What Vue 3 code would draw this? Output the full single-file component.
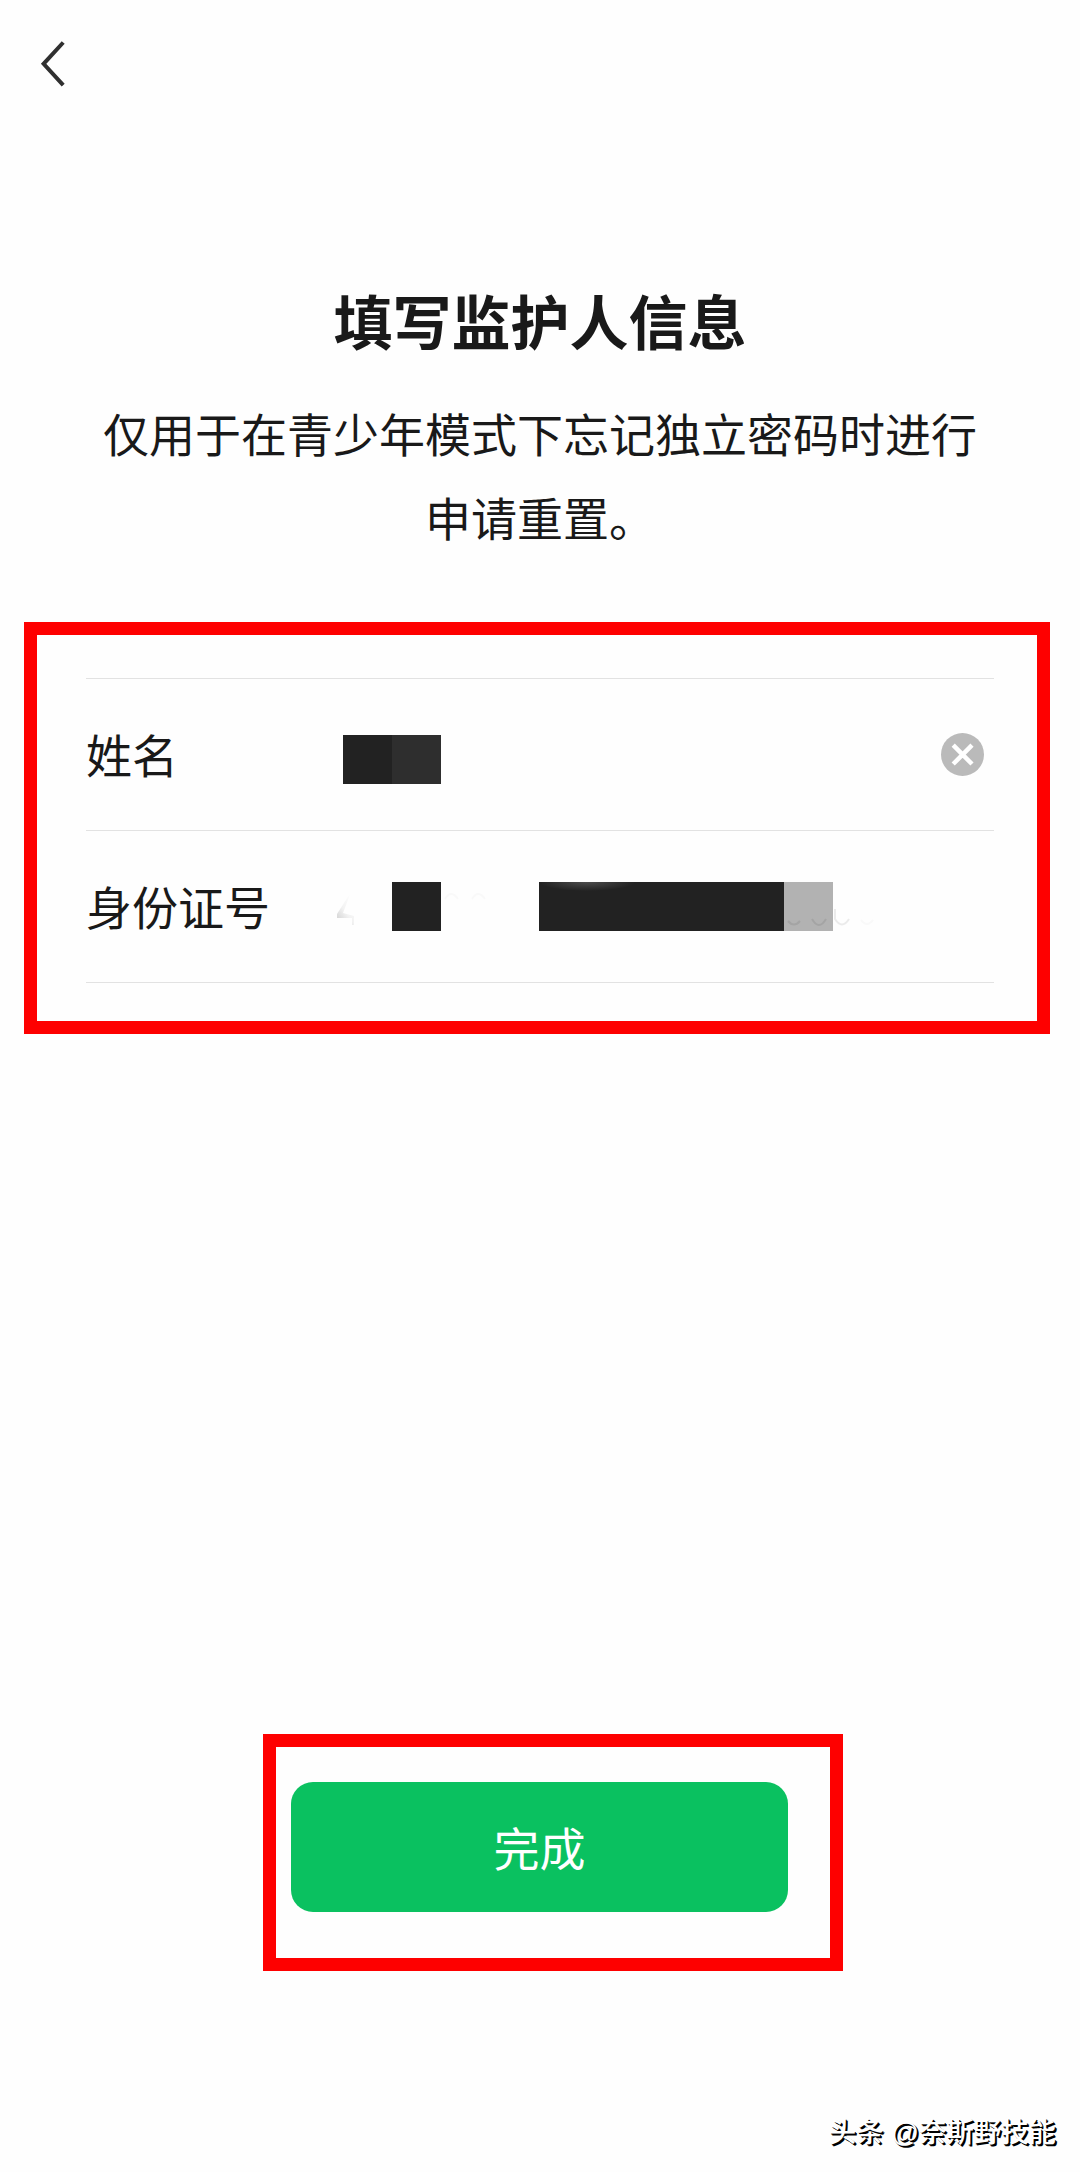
<template>
  <div class="page">
    <header class="nav-bar">
      <svg class="nav-bar__back" viewBox="0 0 28 50" aria-label="返回">
        <path d="M25.2 3.5 L5.6 24.8 L25.2 46.2" />
      </svg>
    </header>

    <section class="intro">
      <h1 class="intro__title">填写监护人信息</h1>
      <p class="intro__text">仅用于在青少年模式下忘记独立密码时进行<br />申请重置。</p>
    </section>

    <section class="highlight highlight--form">
      <div class="form">
        <div v-for="field in fields" :key="field.key" class="form__row">
          <span class="form__label">{{ field.label }}</span>
          <div class="form__value">
            <span
              v-for="(block, index) in field.blocks"
              :key="index"
              :class="['mask', `mask--${block}`]"
            ></span>
            <!-- traces left around the masked number -->
            <svg v-if="field.key === 'id'" class="form__trace" viewBox="0 0 570 49">
              <defs>
                <linearGradient id="trace" x1="0" y1="1" x2="0.7" y2="0">
                  <stop offset="0.1" stop-color="#d4d4d4" />
                  <stop offset="0.5" stop-color="#f2f2f2" />
                  <stop offset="1" stop-color="#fefefe" />
                </linearGradient>
                <radialGradient id="glow">
                  <stop offset="0" stop-color="#4c4c4c" />
                  <stop offset="1" stop-color="#222" />
                </radialGradient>
              </defs>
              <path d="M15 10 L1 32 V36 H16 V43 H18 V34 L7 31 Z" fill="url(#trace)" />
              <ellipse cx="251" cy="0" rx="48" ry="9" fill="url(#glow)" />
              <g class="form__arcs">
                <path d="M109 17 q6 -10 13 0 M136 17 q6 -10 13 0" />
                <path d="M452 39 q6 7 12 0 M476 37 q7 12 14 0" stroke="#a4a4a4" />
                <path d="M499 27 v10 q7 11 14 0" stroke="#ebebeb" />
                <path d="M525 38 q6 8 12 0" />
              </g>
            </svg>
          </div>
          <svg v-if="field.clearable" class="form__clear" viewBox="0 0 43 43">
            <circle cx="21.5" cy="21.5" r="21.5" fill="#bababa" />
            <path d="M12.2 12.2 L31 31 M31 12.2 L12.2 31" />
          </svg>
        </div>
      </div>
    </section>

    <section class="highlight highlight--action">
      <button class="submit" type="button">完成</button>
    </section>

    <footer class="credit">头条 @奈斯野技能</footer>
  </div>
</template>

<script setup>
const fields = [
  {
    key: 'name',
    label: '姓名',
    blocks: ['dark', 'soft'],
    clearable: true
  },
  {
    key: 'id',
    label: '身份证号',
    blocks: ['empty', 'dark', 'empty', 'empty', 'dark', 'dark', 'dark', 'dark', 'dark', 'light'],
    clearable: false
  }
];
</script>

<style>
body {
  margin: 0;
  background: #fefefe;
}
</style>

<style scoped>
.page {
  box-sizing: border-box;
  display: flex;
  flex-direction: column;
  width: 1080px;
  height: 2172px;
  overflow: hidden;
  background: #fefefe;
  color: #191919;
  font-family: "Noto Sans CJK SC", sans-serif;
}

.nav-bar {
  box-sizing: border-box;
  height: 277px;
  padding: 39px 0 0 38px;
}

.nav-bar__back {
  display: block;
  width: 28px;
  height: 50px;
  fill: none;
  stroke: #303030;
  stroke-width: 4;
}

.intro {
  text-align: center;
}

.intro__title {
  margin: 0;
  font-size: 59px;
  font-weight: 700;
  line-height: 86px;
}

.intro__text {
  margin: 27px 0 0;
  font-size: 46px;
  line-height: 84px;
}

.highlight {
  box-sizing: border-box;
  border: 13px solid #fe0000;
}

.highlight--form {
  width: 1026px;
  height: 412px;
  margin: 64px 0 0 24px;
  padding: 43px 43px 0 49px;
}

.form {
  border-top: 1px solid #e2e2e2;
}

.form__row {
  box-sizing: border-box;
  display: flex;
  align-items: center;
  height: 152px;
  padding-right: 10px;
  border-bottom: 1px solid #e2e2e2;
}

.form__label {
  width: 257px;
  margin-bottom: 4px;
  font-size: 46px;
  line-height: 66px;
}

.form__value {
  position: relative;
  display: flex;
  flex: 1;
}

.form__row:first-child .form__value {
  padding-top: 10px;
}

.form__trace {
  position: absolute;
  top: 0;
  left: -7px;
  width: 570px;
  height: 49px;
}

.form__arcs {
  fill: none;
  stroke: #f9f9f9;
  stroke-width: 2;
}

.form__clear {
  width: 43px;
  height: 43px;
  margin-bottom: 1px;
}

.form__clear path {
  fill: none;
  stroke: #fff;
  stroke-width: 4.5;
}

.mask {
  width: 49px;
  height: 49px;
}

.mask--dark {
  background: #222;
}

.mask--soft {
  background: #2e2e2e;
}

.mask--light {
  background: #b2b2b2;
}

.highlight--action {
  width: 580px;
  height: 237px;
  margin: 700px 0 0 263px;
  padding: 35px 0 0 15px;
}

.submit {
  width: 497px;
  height: 130px;
  padding: 0 0 2px;
  border: 0;
  border-radius: 22px;
  background: #0ac160;
  color: #fff;
  font-family: inherit;
  font-size: 46px;
}

.credit {
  margin: auto 24px 19px 0;
  color: #fff;
  font-family: "Liberation Sans", "Noto Sans CJK SC", sans-serif;
  font-size: 27.4px;
  font-weight: 500;
  line-height: 40px;
  text-align: right;
  text-shadow: 1px 1px 0 #000, 2px 2px 0 #000;
}
</style>
